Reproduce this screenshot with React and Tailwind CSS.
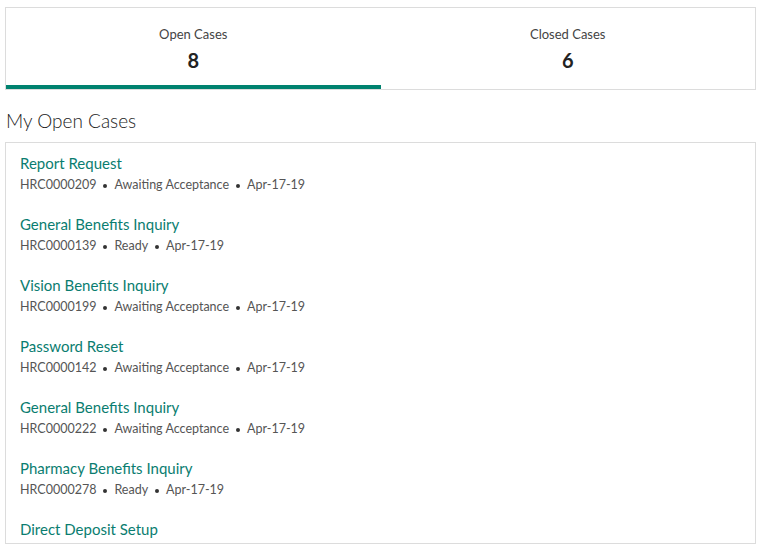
import React from "react";

const cases = [
  { title: "Report Request", id: "HRC0000209", status: "Awaiting Acceptance", date: "Apr-17-19" },
  { title: "General Benefits Inquiry", id: "HRC0000139", status: "Ready", date: "Apr-17-19" },
  { title: "Vision Benefits Inquiry", id: "HRC0000199", status: "Awaiting Acceptance", date: "Apr-17-19" },
  { title: "Password Reset", id: "HRC0000142", status: "Awaiting Acceptance", date: "Apr-17-19" },
  { title: "General Benefits Inquiry", id: "HRC0000222", status: "Awaiting Acceptance", date: "Apr-17-19" },
  { title: "Pharmacy Benefits Inquiry", id: "HRC0000278", status: "Ready", date: "Apr-17-19" },
  { title: "Direct Deposit Setup" },
];

function Dot() {
  return <span className="mx-[7px] inline-block h-[4px] w-[4px] rounded-full bg-[#333] align-middle" />;
}

export default function App() {
  return (
    <div className="h-[550px] w-[761px] overflow-hidden bg-white font-['Lato',sans-serif] text-[#333]">
      <div className="px-[5px] pt-[7px]">
        <div className="flex h-[83px] border border-[#dcdcdc]">
          <div className="flex flex-1 flex-col items-center border-b-4 border-[#00826f] pt-[18px]">
            <div className="text-[13px] leading-[16px] text-[#444]">Open Cases</div>
            <div className="mt-[6px] text-[20px] font-bold leading-[24px] text-[#222]">8</div>
          </div>
          <div className="flex flex-1 flex-col items-center pt-[18px]">
            <div className="text-[13px] leading-[16px] text-[#444]">Closed Cases</div>
            <div className="mt-[6px] text-[20px] font-bold leading-[24px] text-[#222]">6</div>
          </div>
        </div>
        <h2 className="mt-[19px] pl-[1px] text-[19px] font-light leading-[24px] text-[#222]">My Open Cases</h2>
        <div className="mt-[9px] h-[402px] overflow-hidden border border-[#dcdcdc] px-[14px] pt-[10px]">
          {cases.map((c, i) => (
            <div key={i} className="h-[61px]">
              <div className="text-[15px] leading-[20px] text-[#0a7d70]">{c.title}</div>
              {c.id && (
                <div className="mt-[2px] text-[12.5px] leading-[20px] text-[#555]">
                  {c.id}
                  <Dot />
                  {c.status}
                  <Dot />
                  {c.date}
                </div>
              )}
            </div>
          ))}
        </div>
      </div>
    </div>
  );
}
